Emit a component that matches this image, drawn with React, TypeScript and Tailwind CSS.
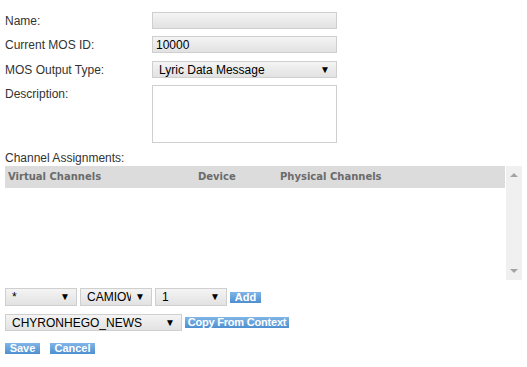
import React from 'react';

const field =
  'h-[17px] border border-[#cfcfcf] bg-gradient-to-b from-[#f4f4f4] to-[#e2e2e2] text-[12px] leading-[14px] text-black';
const btn =
  'h-[11px] flex items-center justify-center whitespace-nowrap bg-gradient-to-b from-[#80b5e6] to-[#4e8fd0] text-white font-bold text-[11px] leading-none';

const Arrow = () => <span className="shrink-0 text-[10px] leading-none text-black">▼</span>;

const Select = ({ value, w, h = 'h-[18px]' }: { value: string; w: string; h?: string }) => (
  <div className={`${w} ${h} flex items-center gap-[4px] pl-[6px] pr-[6px] border border-[#cfcfcf] bg-gradient-to-b from-[#f4f4f4] to-[#e2e2e2] text-[12px] leading-[14px] text-black`}>
    <span className="flex-1 min-w-0 overflow-hidden whitespace-nowrap">{value}</span>
    <Arrow />
  </div>
);

export default function App() {
  return (
    <div className="w-[527px] h-[367px] bg-white text-[#333] pl-[5px] pt-[12px] leading-[14px]" style={{ fontFamily: '"Liberation Sans", Arial, sans-serif' }}>
      <div className="flex items-center">
        <div className="w-[147px] text-[12px]">Name:</div>
        <div className={`${field} w-[185px]`} />
      </div>
      <div className="flex items-center mt-[7px]">
        <div className="w-[147px] text-[12px]">Current MOS ID:</div>
        <div className={`${field} w-[185px] flex items-center pl-[3px]`}>10000</div>
      </div>
      <div className="flex items-center mt-[8px]">
        <div className="w-[147px] text-[12px]">MOS Output Type:</div>
        <Select value="Lyric Data Message" w="w-[185px]" h="h-[17px]" />
      </div>
      <div className="flex items-start mt-[7px]">
        <div className="w-[147px] text-[12px] pt-[2px]">Description:</div>
        <div className="w-[185px] h-[58px] border border-[#cfcfcf] bg-white" />
      </div>

      <div className="mt-[8px] text-[12px]">Channel Assignments:</div>
      <div className="flex h-[114px] mt-[1px]">
        <div className="w-[500px] flex flex-col">
          <div className="h-[22px] bg-[#dcdcdc] flex items-center text-[10px] font-bold text-[#6b6b6b]" style={{ fontFamily: '"DejaVu Sans", Verdana, sans-serif' }}>
            <span className="w-[193px] pl-[3px]">Virtual Channels</span>
            <span className="w-[82px]">Device</span>
            <span>Physical Channels</span>
          </div>
          <div className="flex-1 bg-white" />
        </div>
        <div className="w-[16px] ml-[1px] bg-[#f0f0f0] flex flex-col items-center justify-between py-[7px]">
          <svg width="8" height="4" viewBox="0 0 8 4"><path d="M4 0L8 4H0z" fill="#a3a3a3" /></svg>
          <svg width="8" height="4" viewBox="0 0 8 4"><path d="M0 0H8L4 4z" fill="#a3a3a3" /></svg>
        </div>
      </div>

      <div className="flex items-center mt-[8px] gap-[3px]">
        <Select value="*" w="w-[72px]" />
        <Select value="CAMIOWI" w="w-[72px]" />
        <Select value="1" w="w-[72px]" />
        <div className={`${btn} w-[31px]`}>Add</div>
      </div>
      <div className="flex items-center mt-[8px] gap-[3px]">
        <Select value="CHYRONHEGO_NEWS" w="w-[177px]" h="h-[17px]" />
        <div className={`${btn} w-[104px] text-[10.5px] tracking-[-0.2px]`}>Copy From Context</div>
      </div>
      <div className="flex items-center mt-[12px] gap-[10px]">
        <div className={`${btn} w-[35px]`}>Save</div>
        <div className={`${btn} w-[45px]`}>Cancel</div>
      </div>
    </div>
  );
}
